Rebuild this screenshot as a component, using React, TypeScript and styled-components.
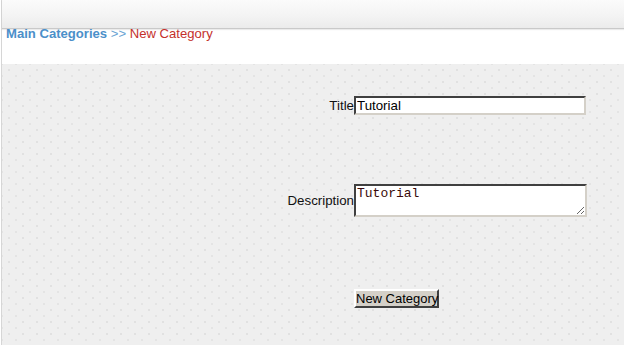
import React from 'react'
import styled, { createGlobalStyle } from 'styled-components'

const GlobalStyle = createGlobalStyle`
  html, body {
    margin: 0;
    padding: 0;
    background: #ffffff;
  }
  body {
    font-family: 'Liberation Sans', Arial, sans-serif;
    font-size: 13px;
  }
`

export default function App() {
  return (
    <>
      <GlobalStyle />
      <Page>
        <TopBar />
        <Breadcrumb>
          <CrumbLink>Main Categories</CrumbLink>
          <CrumbSep> &gt;&gt; </CrumbSep>
          <CrumbCurrent>New Category</CrumbCurrent>
        </Breadcrumb>
        <Panel>
          <FormGrid>
            <Label>Title</Label>
            <TextInput defaultValue="Tutorial" />
            <Spacer $height={69} />
            <Label>Description</Label>
            <TextArea defaultValue="Tutorial" />
            <Spacer $height={72} />
            <span />
            <div>
              <Button type="button">New Category</Button>
            </div>
          </FormGrid>
        </Panel>
      </Page>
    </>
  )
}

const Page = styled.div`
  min-height: 345px;
  margin-left: 1px;
  border-left: 1px solid #d6d6d6;
  display: flex;
  flex-direction: column;
`

const TopBar = styled.div`
  height: 28px;
  background: linear-gradient(#fbfbfb, #f3f3f3 60%, #ebebeb);
  border-bottom: 1px solid #c9c9c9;
  box-shadow: 0 1px 1px rgba(0, 0, 0, 0.08);
`

const Breadcrumb = styled.div`
  margin-top: -3px;
  padding-left: 4px;
  height: 38px;
  line-height: 15px;
  font-size: 13.1px;
  position: relative;
`

const CrumbLink = styled.span`
  color: #4b8fc9;
  font-weight: bold;
`

const CrumbSep = styled.span`
  color: #6aa3d3;
`

const CrumbCurrent = styled.span`
  color: #c4302b;
`

const Panel = styled.div`
  flex: 1;
  background-color: #efefef;
  background-image: radial-gradient(circle, #e1e1e1 0.8px, transparent 1.2px),
    radial-gradient(circle, #e4e4e4 0.8px, transparent 1.2px);
  background-size: 14px 12px, 14px 12px;
  background-position: 0 0, 7px 6px;
  padding-top: 32px;
`

const FormGrid = styled.div`
  display: grid;
  grid-template-columns: 352px 233px;
  align-items: center;
`

const Spacer = styled.div<{ $height: number }>`
  grid-column: 1 / span 2;
  height: ${(p) => p.$height}px;
`

const Label = styled.label`
  justify-self: end;
  color: #111;
  font-size: 13.3px;
`

const TextInput = styled.input`
  box-sizing: border-box;
  width: 232px;
  height: 19px;
  margin: 0;
  padding: 0 1px;
  border: 2px solid;
  border-color: #404040 #d4d0c8 #d4d0c8 #404040;
  background: #fff;
  font-family: 'Liberation Sans', Arial, sans-serif;
  font-size: 13.3px;
  color: #000;
  outline: none;
`

const TextArea = styled.textarea`
  box-sizing: border-box;
  width: 233px;
  height: 33px;
  margin: 0;
  padding: 0 1px;
  border: 2px solid;
  border-color: #404040 #d4d0c8 #d4d0c8 #404040;
  background: #fff;
  font-family: 'Liberation Mono', 'Courier New', monospace;
  font-size: 13px;
  line-height: 15px;
  color: #3a0a0a;
  outline: none;
  display: block;
`

const Button = styled.button`
  box-sizing: border-box;
  height: 19px;
  width: 85px;
  margin: 0;
  padding: 0;
  white-space: nowrap;
  background: #d4d0c8;
  border: 2px solid;
  border-color: #ffffff #404040 #404040 #ffffff;
  font-family: 'Liberation Sans', Arial, sans-serif;
  font-size: 13px;
  line-height: 13px;
  color: #000;
  cursor: pointer;
`
